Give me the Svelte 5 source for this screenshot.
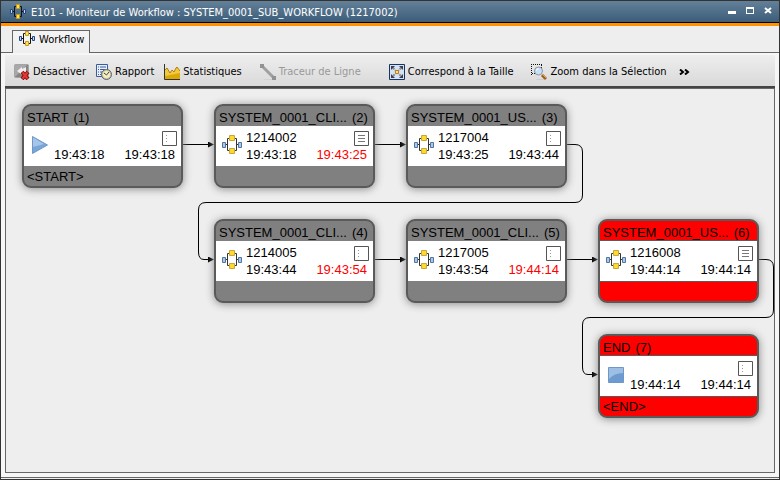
<script lang="ts">
  type Node = {
    name: string;
    num: number;
    x: number;
    y: number;
    kind: "start" | "end" | "flow";
    start: string;
    stop: string;
    id?: string;
    log?: boolean;
    late?: boolean;
    failed?: boolean;
    footer?: string;
  };

  const nodes: Node[] = [
    { name: "START", num: 1, x: 16, y: 15, kind: "start", start: "19:43:18", stop: "19:43:18", footer: "<START>" },
    { name: "SYSTEM_0001_CLI...", num: 2, x: 208, y: 15, kind: "flow", id: "1214002", start: "19:43:18", stop: "19:43:25", log: true, late: true },
    { name: "SYSTEM_0001_US...", num: 3, x: 400, y: 15, kind: "flow", id: "1217004", start: "19:43:25", stop: "19:43:44" },
    { name: "SYSTEM_0001_CLI...", num: 4, x: 208, y: 130, kind: "flow", id: "1214005", start: "19:43:44", stop: "19:43:54", late: true },
    { name: "SYSTEM_0001_CLI...", num: 5, x: 400, y: 130, kind: "flow", id: "1217005", start: "19:43:54", stop: "19:44:14", late: true },
    { name: "SYSTEM_0001_US...", num: 6, x: 592, y: 130, kind: "flow", id: "1216008", start: "19:44:14", stop: "19:44:14", log: true, failed: true },
    { name: "END", num: 7, x: 592, y: 245, kind: "end", start: "19:44:14", stop: "19:44:14", failed: true, footer: "<END>" },
  ];

  const links = [
    "M177 55.5H203",
    "M369 55.5H395",
    "M561 55.5H569Q576.5 55.5 576.5 63V106Q576.5 113.5 569 113.5H200Q192.5 113.5 192.5 121V163Q192.5 170.5 198 170.5H203",
    "M369 170.5H395",
    "M561 170.5H587",
    "M753 170.5H760Q767.5 170.5 767.5 178V221Q767.5 228.5 760 228.5H584Q576.5 228.5 576.5 236V278Q576.5 285.5 582 285.5H587",
  ];

  const tools = [
    { icon: "disable", label: "Désactiver" },
    { icon: "report", label: "Rapport" },
    { icon: "stats", label: "Statistiques" },
    { icon: "line", label: "Traceur de Ligne", disabled: true },
    { icon: "fit", label: "Correspond à la Taille" },
    { icon: "zoom", label: "Zoom dans la Sélection" },
  ];
</script>

{#snippet flowIcon()}
  <svg width="16" height="16" viewBox="0 0 16 16" aria-hidden="true">
    <path class="wire" d="M3 7.500h1.500M6.500 2.500h-2v10h2M9.500 2.500h2v10h-2M11.500 7.500H13" />
    <path d="M.5 5.500h2v4h-2zM13.500 5.500h2v4h-2z" fill="#c4d8f5" stroke="#24457f" />
    <path d="M6.500.5h3v4h-3zM6.500 10.500h3v4h-3z" fill="#ffe14a" stroke="#c89a1c" />
  </svg>
{/snippet}

{#snippet toolIcon(name: string)}
  <svg width="16" height="16" viewBox="0 0 16 16" aria-hidden="true">
    {#if name === "disable"}
      <rect x=".5" y=".5" width="14" height="13" rx="1" fill="#858585" stroke="#a4a4a4" />
      <path d="M1 13 13 1H1z" fill="#a8a8a8" />
      <path d="m3 7 5-4v2l4-2v8L8 9v2z" fill="#eee" />
      <path d="m8 8 6 7M14 8l-6 7" stroke="#8b1010" stroke-width="4" />
      <path d="m8.500 8.500 5 6M13.500 8.500l-5 6" stroke="#e33a35" stroke-width="2" />
    {:else if name === "report"}
      <path d="M.5.5h11v12H.5z" fill="#e6effb" stroke="#3c5c98" />
      <path d="M2 3h1M4 3h6M2 5.500h1M4 5.500h5M2 8h1M4 8h2M2 10.500h1M4 10.500h1" stroke="#3c5c98" />
      <circle cx="10.500" cy="10.500" r="5" fill="#d9c77c" stroke="#4e6689" />
      <circle cx="10.500" cy="10.500" r="3.500" fill="#f4edc8" />
      <path d="m8 9 2.500 2L13 8" fill="none" stroke="#444" />
    {:else if name === "stats"}
      <path d="M1 15V6l2-2 3 5 2-3 2 2 2-4 1-1 3 4v8z" fill="#f0cb3c" />
      <path d="M1 15v-3l15-3v6z" fill="#dca708" />
      <path d="m1 6 2-2 3 5 2-3 2 2 2-4 1-1 3 4" fill="none" stroke="#b37b12" />
      <path d="M.5 0v15.500H16" fill="none" stroke="#333" />
    {:else if name === "line"}
      <path d="M5 15h7l3 1H3z" fill="#d2d2d2" />
      <path d="m2 2 12 12" stroke="#a0a0a0" stroke-width="3" />
      <path d="M0 0h4v4H0zM12 12h4v4h-4z" fill="#929292" />
    {:else if name === "fit"}
      <path d="M.5.5h15v15H.5z" fill="#d5e2f3" stroke="#173468" />
      <path d="M4 4 12 12M12 4 4 12" stroke="#858b93" stroke-width="2" stroke-dasharray="2 1" />
      <path d="M2 2h4L2 6zM14 2h-4l4 4zM2 14h4l-4-4zM14 14h-4l4-4z" fill="#3b3f45" />
      <path d="M6.500 6.500h3v3h-3z" fill="#ffe07a" stroke="#c07e20" />
    {:else}
      <path d="M0 .5h11M.5 2v9M10.500 1v3M1 9.500h3" stroke="#111" stroke-dasharray="1 1" />
      <path d="m11 11 4 4" stroke="#9b5e1d" stroke-width="3" />
      <path d="m11 10 4 4" stroke="#dfa050" />
      <path d="M5 15h7l2 1H6z" fill="#ccc" />
      <circle cx="7.500" cy="7" r="4" fill="#c9dff5" stroke="#8695a8" />
      <path d="M5 7q0-3 3-3-1 2-3 3" fill="#fff" />
    {/if}
  </svg>
{/snippet}

<div class="window">
  <header class="titlebar">
    {@render flowIcon()}
    <h1>E101 - Moniteur de Workflow : SYSTEM_0001_SUB_WORKFLOW (1217002)</h1>
    <div class="controls">
      <button aria-label="Réduire">
        <svg width="8" height="8" viewBox="0 0 8 8"><path d="M0 4h8v3H0z" fill="#fff" /></svg>
      </button>
      <button aria-label="Agrandir">
        <svg width="8" height="8" viewBox="0 0 8 8">
          <path d="M0 0h8v7H0zM1 2v4h6V2z" fill="#fff" fill-rule="evenodd" />
        </svg>
      </button>
      <button aria-label="Fermer">
        <svg width="8" height="8" viewBox="0 0 8 8">
          <path d="m1 1 6 5M7 1 1 6" stroke="#fff" stroke-width="2" />
        </svg>
      </button>
    </div>
  </header>

  <div class="tabs" role="tablist">
    <button class="tab" role="tab" aria-selected="true">
      {@render flowIcon()}
      Workflow
    </button>
  </div>

  <main>
    <div class="toolbar" role="toolbar">
      {#each tools as tool}
        <button class="tool {tool.icon}" disabled={tool.disabled}>
          {@render toolIcon(tool.icon)}
          {tool.label}
        </button>
      {/each}
      <button class="more" aria-label="Plus">
        <svg width="11" height="6" viewBox="0 0 11 6">
          <path d="m1 .5 3 2.500-3 2.500M6 .5l3 2.500-3 2.500" fill="none" stroke="#000" stroke-width="2" />
        </svg>
      </button>
    </div>

    <div class="canvas">
      <svg class="links" aria-hidden="true">
        <defs>
          <marker id="arrow" markerWidth="6" markerHeight="6" refX="1" refY="3" orient="auto" markerUnits="userSpaceOnUse">
            <path d="M0 0 6 3 0 6z" />
          </marker>
        </defs>
        {#each links as d}
          <path {d} marker-end="url(#arrow)" />
        {/each}
      </svg>

      {#each nodes as node}
        <article class="node" class:failed={node.failed} style="left: {node.x}px; top: {node.y}px">
          <div class="head">
            <span>{node.name}</span>
            <span>({node.num})</span>
          </div>
          <div class="body">
            <div class="kind">
              {#if node.kind === "start"}
                <svg width="20" height="20" viewBox="0 0 20 20" aria-hidden="true">
                  <path d="M2.500 1.500 17.500 10l-15 8.500z" fill="#79a5d8" stroke="#6f98c8" />
                  <path d="M3 2.500 14 9 3 12z" fill="#a6c5e8" />
                </svg>
              {:else if node.kind === "end"}
                <svg width="20" height="20" viewBox="0 0 20 20" aria-hidden="true">
                  <path d="M2.500 2.500h15v15h-15z" fill="#6d9bd0" stroke="#6f98c8" />
                  <path d="M3 3h14v5Q8 8 3 14z" fill="#9dbfe4" />
                </svg>
              {:else}
                <svg width="20" height="20" viewBox="0 0 20 20" aria-hidden="true">
                  <path d="M4 9.500h1.500M8 3.500H5.500v12H8M12 3.500h2.500v12H12M14.500 9.500H16" fill="none" stroke="#333" />
                  <path d="M.5 7.500h3v5h-3zM16.500 7.500h3v5h-3z" fill="#a5caf2" stroke="#52749f" />
                  <path d="M7.500.5h5v5h-5zM7.500 13.500h5v5h-5z" fill="#fbd92f" stroke="#c9a63a" />
                </svg>
              {/if}
            </div>
            <div class="info">
              <div class="row">
                <span>{node.id ?? ""}</span>
                <svg class="log" width="15" height="15" viewBox="0 0 15 15" aria-hidden="true">
                  <path d="M.5.5h14v14H.5z" fill="#fff" stroke="#555" />
                  {#if node.log}
                    <path d="M4 4.500h7M4 7.500h7M4 10.500h7" stroke="#777" />
                  {:else}
                    <path d="M4.500 4v1M4.500 7v1M4.500 10v1" stroke="#999" />
                  {/if}
                </svg>
              </div>
              <div class="row times">
                <time>{node.start}</time>
                <time class:late={node.late}>{node.stop}</time>
              </div>
            </div>
          </div>
          <div class="foot">{node.footer ?? ""}</div>
        </article>
      {/each}
    </div>
  </main>
</div>

<style>
  :global(body) {
    margin: 0;
  }
  .window {
    display: flex;
    flex-direction: column;
    box-sizing: border-box;
    min-height: 100vh;
    padding-bottom: 1px;
    border: 1px solid #333;
    background: #eee;
    color: #000;
    font-family: "DejaVu Sans Condensed", "DejaVu Sans", sans-serif;
    font-size: 11px;
  }
  button {
    display: flex;
    align-items: center;
    padding: 0;
    border: 0;
    background: none;
    color: inherit;
    font: inherit;
    white-space: nowrap;
  }
  svg {
    display: block;
    flex: none;
  }
  .titlebar {
    display: flex;
    align-items: center;
    height: 21px;
    padding: 0 7px 0 9px;
    border-bottom: 1px solid #000;
    background: linear-gradient(#648099, #3b5d79);
    color: #fff;
  }
  h1 {
    flex: 1;
    margin: 0 0 0 5px;
    padding-top: 2px;
    font-size: 11px;
    font-weight: normal;
    white-space: nowrap;
  }
  .wire {
    fill: none;
    stroke: #111;
  }
  .controls {
    display: flex;
    gap: 10px;
    padding-bottom: 2px;
  }
  .tabs {
    display: flex;
    box-sizing: border-box;
    height: 30px;
    padding: 4px 0 0 11px;
    border-top: 3px solid #ff9100;
    border-bottom: 1px solid #666;
  }
  .tab {
    gap: 4px;
    height: 23px;
    padding: 0 5px 6px 6px;
    border: 1px solid #666;
    border-bottom: 0;
    background: linear-gradient(#f4f4f4, #eee);
  }
  main {
    display: flex;
    flex: 1;
    flex-direction: column;
    padding: 2px 4px 4px;
    border-bottom: 1px solid #666;
    background: #f6f6f6;
  }
  .toolbar {
    display: flex;
    align-items: center;
    height: 29px;
    padding: 2px 0 0 9px;
    border-bottom: 2px solid #444;
    background: linear-gradient(#eee, #d9d9d9);
  }
  .tool {
    gap: 3px;
    margin-right: 10px;
  }
  .tool:disabled {
    color: #999;
  }
  .stats,
  .fit {
    margin-right: 18px;
  }
  .line {
    margin-right: 28px;
  }
  .zoom {
    margin-right: 12px;
  }
  .canvas {
    position: relative;
    flex: 1;
    min-height: 340px;
    border: 1px solid #666;
    background: #eee;
    overflow: hidden;
  }
  .links {
    position: absolute;
    inset: 0;
    width: 100%;
    height: 100%;
    fill: none;
    stroke: #000;
  }
  .links marker path {
    fill: #000;
    stroke: none;
  }
  .node {
    position: absolute;
    box-sizing: border-box;
    width: 161px;
    border: 2px solid #5a5a5a;
    border-radius: 9px;
    background: #808080;
    box-shadow: 0 1px 8px #888;
    font: 13px/20px "Liberation Sans", Arial, sans-serif;
  }
  .head {
    display: flex;
    gap: 5px;
    height: 20px;
    padding-left: 3px;
    line-height: 23px;
    white-space: nowrap;
  }
  .body {
    display: flex;
    height: 40px;
    background: #fff;
  }
  .kind {
    padding: 9px 4px 0 6px;
  }
  .info {
    flex: 1;
    padding: 3px 4px 0 0;
  }
  .row {
    display: flex;
    justify-content: space-between;
    height: 17px;
    line-height: 17px;
  }
  .log {
    margin-top: 2px;
  }
  .times {
    padding-right: 2px;
  }
  .late {
    color: #f00;
  }
  .foot {
    height: 20px;
    padding-left: 3px;
    line-height: 21px;
  }
  .failed {
    background: #f00;
  }
  .failed .body {
    box-shadow: 0 -1px #5a5a5a, 0 1px #5a5a5a;
  }
</style>
